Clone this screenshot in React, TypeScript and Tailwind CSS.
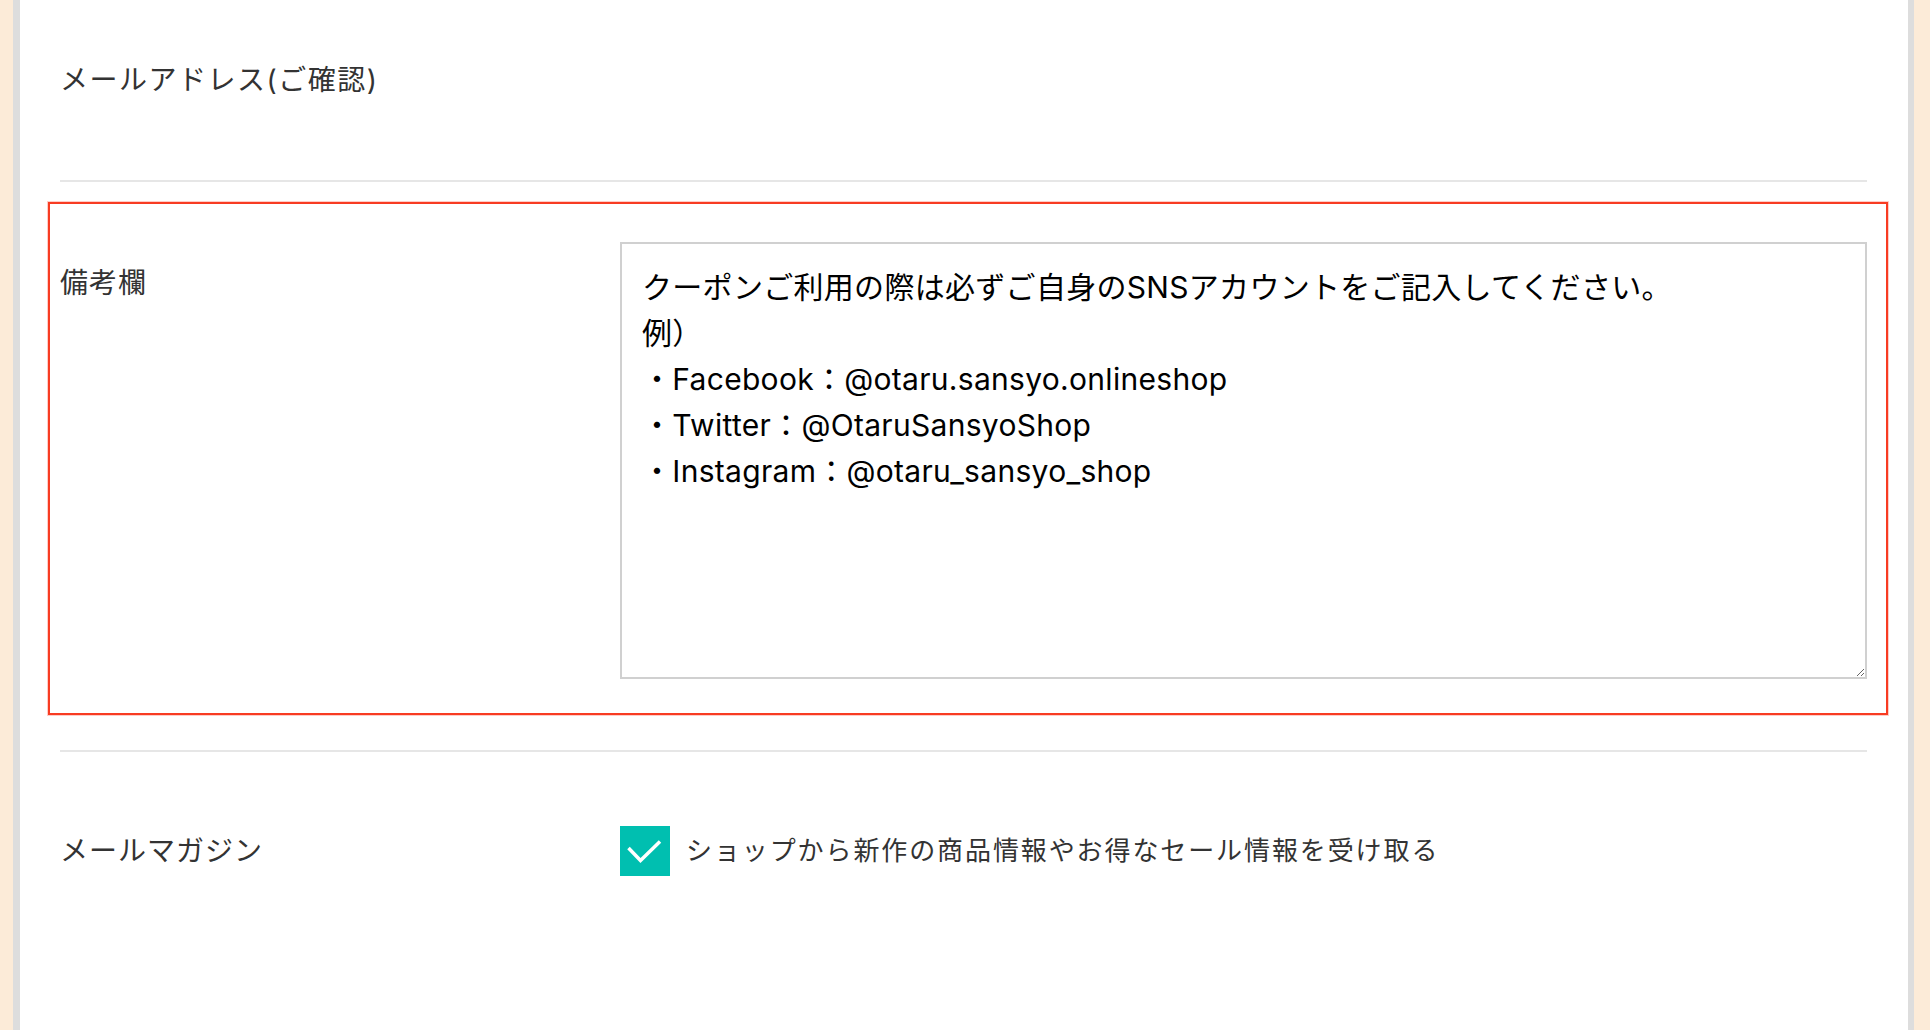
import React from "react";

const jp = { fontFamily: '"Inter", "Noto Sans CJK JP", sans-serif' };

const memo = `クーポンご利用の際は必ずご自身のSNSアカウントをご記入してください。
例）
・Facebook：@otaru.sansyo.onlineshop
・Twitter：@OtaruSansyoShop
・Instagram：@otaru_sansyo_shop`;

export default function App() {
  return (
    <div className="flex h-screen w-full overflow-hidden bg-[#fcebd8]" style={jp}>
      <div className="ml-[13px] mr-[16px] flex flex-1 flex-col border-l-[7px] border-r-[6px] border-[#dddddd] bg-white">
        {/* Row: email confirm */}
        <div className="flex pl-[40px] pr-[41px] pt-[60px] pb-[80px]">
          <div className="text-[28px] leading-[40px] tracking-[1.5px] text-[#333333]">
            メールアドレス(ご確認)
          </div>
        </div>
        <div className="ml-[40px] mr-[41px] h-[2px] bg-[#e6e6e6]" />

        {/* Highlighted row: memo */}
        <div className="ml-[28px] mr-[20px] mt-[20px] flex border-2 border-[#f83c22] pb-[34px] pl-[10px] pr-[19px] pt-[38px] shadow-[0_0_0_1px_rgba(255,90,70,0.3)]">
          <div className="w-[560px] shrink-0 pt-[21px] text-[28px] leading-[40px] tracking-[1px] text-[#333333]">
            備考欄
          </div>
          <textarea
            className="h-[437px] flex-1 border-2 border-[#d0d0d0] bg-white pl-[20px] pr-[22px] pt-[20px] text-[30px] leading-[46px] tracking-[0.3px] text-black outline-none"
            style={jp}
            defaultValue={memo}
          />
        </div>

        <div className="ml-[40px] mr-[41px] mt-[35px] h-[2px] bg-[#e6e6e6]" />

        {/* Row: mail magazine */}
        <div className="flex items-center pl-[40px] pr-[41px] pt-[74px]">
          <div className="w-[560px] shrink-0 text-[28px] leading-[40px] tracking-[1px] text-[#333333]">
            メールマガジン
          </div>
          <div className="flex items-center">
            <div className="flex h-[50px] w-[50px] items-center justify-center bg-[#00bfb0]">
              <svg width="50" height="50" viewBox="0 0 50 50">
                <polyline
                  points="8.5,22 20.5,34.5 40,15.5"
                  fill="none"
                  stroke="#ffffff"
                  strokeWidth="3.5"
                />
              </svg>
            </div>
            <span className="ml-[16px] text-[26px] leading-[40px] tracking-[1.9px] text-[#333333]">
              ショップから新作の商品情報やお得なセール情報を受け取る
            </span>
          </div>
        </div>
      </div>
    </div>
  );
}
